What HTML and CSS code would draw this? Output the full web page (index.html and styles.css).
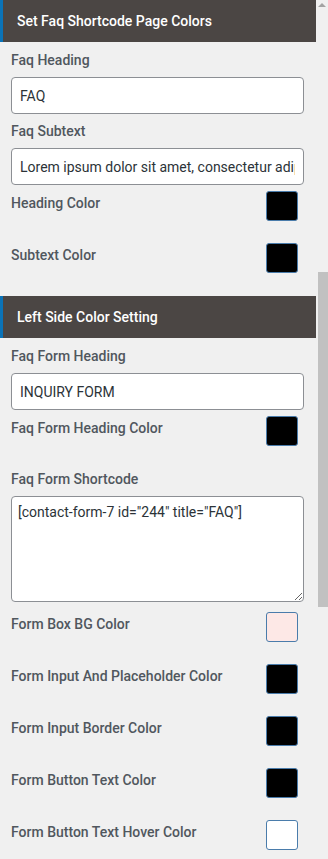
FILE: index.html
```html
<!DOCTYPE html>
<html lang="en">
<head>
    <meta charset="UTF-8">
    <meta name="viewport" content="width=device-width, initial-scale=1.0">
    <title>FAQ Settings</title>
    <link rel="stylesheet" href="styles.css">
</head>
<body>
    <div class="page">
        <!-- Painel de configurações -->
        <div class="panel">
            <h2 class="section-title">Set Faq Shortcode Page Colors</h2>
            <div class="section">
                <label class="field-label" for="faq-heading">Faq Heading</label>
                <input class="text-input" type="text" id="faq-heading" value="FAQ">

                <label class="field-label" for="faq-subtext">Faq Subtext</label>
                <input class="text-input" type="text" id="faq-subtext" value="Lorem ipsum dolor sit amet, consectetur adipiscing elit">

                <div class="color-row">
                    <span class="color-label">Heading Color</span>
                    <span class="swatch" style="background-color: #000000;"></span>
                </div>
                <div class="color-row">
                    <span class="color-label">Subtext Color</span>
                    <span class="swatch" style="background-color: #000000;"></span>
                </div>
            </div>

            <h2 class="section-title">Left Side Color Setting</h2>
            <div class="section">
                <label class="field-label" for="form-heading">Faq Form Heading</label>
                <input class="text-input" type="text" id="form-heading" value="INQUIRY FORM">

                <div class="color-row">
                    <span class="color-label">Faq Form Heading Color</span>
                    <span class="swatch" style="background-color: #000000;"></span>
                </div>

                <label class="field-label spaced" for="form-shortcode">Faq Form Shortcode</label>
                <textarea class="text-area" id="form-shortcode">[contact-form-7 id="244" title="FAQ"]</textarea>

                <div class="color-row first">
                    <span class="color-label">Form Box BG Color</span>
                    <span class="swatch" style="background-color: #fde8e6;"></span>
                </div>
                <div class="color-row">
                    <span class="color-label">Form Input And Placeholder Color</span>
                    <span class="swatch" style="background-color: #000000;"></span>
                </div>
                <div class="color-row">
                    <span class="color-label">Form Input Border Color</span>
                    <span class="swatch" style="background-color: #000000;"></span>
                </div>
                <div class="color-row">
                    <span class="color-label">Form Button Text Color</span>
                    <span class="swatch" style="background-color: #000000;"></span>
                </div>
                <div class="color-row">
                    <span class="color-label">Form Button Text Hover Color</span>
                    <span class="swatch" style="background-color: #ffffff;"></span>
                </div>
            </div>
        </div>

        <!-- Barra de rolagem -->
        <div class="scrollbar">
            <span class="scroll-arrow"></span>
            <span class="scroll-thumb"></span>
        </div>
    </div>
</body>
</html>
```

FILE: styles.css
```css
/* Reset */
* {
    margin: 0;
    padding: 0;
    box-sizing: border-box;
}

body {
    font-family: Roboto, 'Liberation Sans', sans-serif;
    background-color: #f0f0f0;
    color: #50575e;
    overflow: hidden;
}

.page {
    display: flex;
    width: 328px;
    height: 859px;
}

/* Painel */
.panel {
    width: 316px;
}

.section-title {
    height: 42px;
    line-height: 42px;
    background-color: #4b4644;
    border-left: 3px solid #0a73b8;
    color: #ffffff;
    font-size: 14px;
    font-weight: 500;
    padding-left: 14px;
}

.section {
    display: flex;
    flex-direction: column;
    padding: 8px 12px 23px 11px;
}

.field-label {
    display: block;
    font-size: 14px;
    font-weight: 500;
    line-height: 20px;
    margin-bottom: 7px;
}

.field-label.spaced {
    margin-top: 23px;
}

.text-input {
    height: 37px;
    width: 293px;
    padding: 0 8px;
    border: 1px solid #8c8f94;
    border-radius: 4px;
    background-color: #ffffff;
    font-family: Roboto, 'Liberation Sans', sans-serif;
    font-size: 14px;
    color: #2c3338;
    margin-bottom: 7px;
}

.text-area {
    display: block;
    height: 106px;
    width: 293px;
    padding: 5px 6px;
    border: 1px solid #8c8f94;
    border-radius: 4px;
    background-color: #ffffff;
    font-family: Roboto, 'Liberation Sans', sans-serif;
    font-size: 14px;
    line-height: 20px;
    color: #2c3338;
}

/* Linhas de cor */
.color-row {
    display: flex;
    justify-content: space-between;
    align-items: flex-start;
    height: 30px;
    margin-top: 22px;
    padding-right: 6px;
}

.text-input + .color-row {
    margin-top: -1px;
}

.color-row.first {
    margin-top: 10px;
}

.color-label {
    font-size: 14px;
    font-weight: 500;
    line-height: 20px;
    padding-top: 2px;
}

.swatch {
    width: 32px;
    height: 30px;
    border: 1px solid #4a7cab;
    border-radius: 3px;
}

/* Barra de rolagem */
.scrollbar {
    width: 12px;
    display: flex;
    flex-direction: column;
    align-items: flex-end;
}

.scroll-arrow {
    width: 0;
    height: 0;
    margin: 3px 2px 0 0;
    border-left: 4px solid transparent;
    border-right: 4px solid transparent;
    border-bottom: 4px solid #a3a3a3;
}

.scroll-thumb {
    width: 10px;
    height: 335px;
    margin-top: 265px;
    background-color: #c1c1c1;
}
```
